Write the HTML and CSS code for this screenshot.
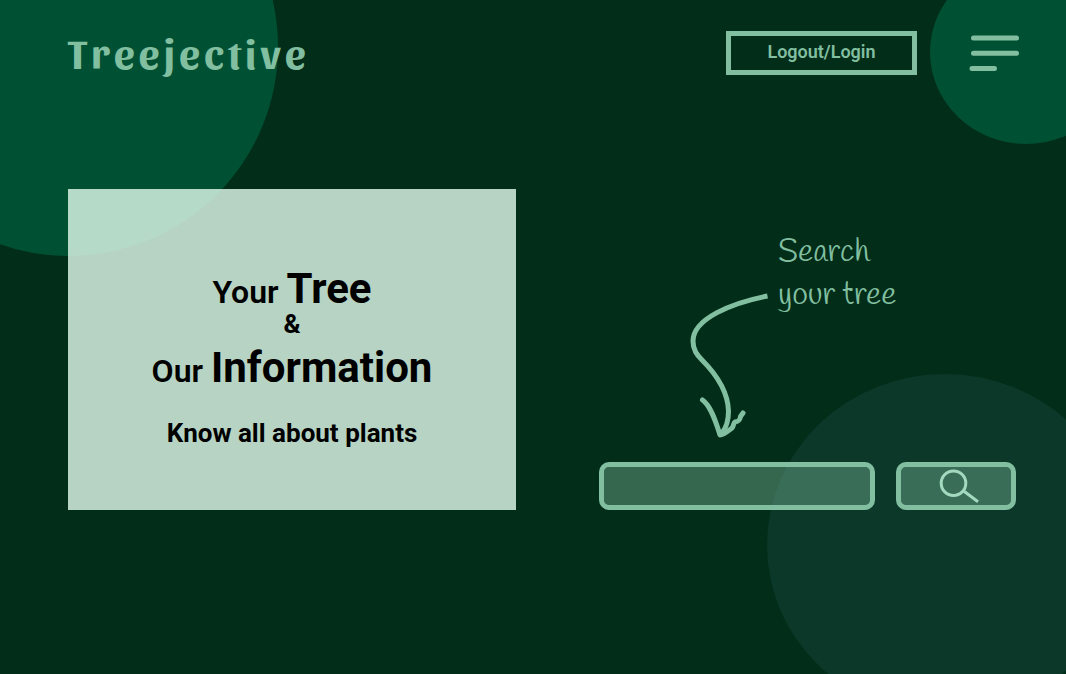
FILE: index.html
```html
<!DOCTYPE html>
<html lang="en">
<head>
<meta charset="utf-8">
<meta name="viewport" content="width=device-width, initial-scale=1">
<title>Treejective</title>
<link rel="stylesheet" href="styles.css">
</head>
<body>
<div class="page">
  <div class="blob blob-left"></div>
  <div class="blob blob-right"></div>
  <div class="blob blob-bottom"></div>

  <header class="header">
    <a class="brand" href="#">Treejective</a>
    <nav class="actions">
      <button class="login" type="button">Logout/Login</button>
      <button class="menu" type="button" aria-label="Menu">
        <svg class="menu-icon" viewBox="969 35 50 37" aria-hidden="true">
          <path d="M973.5 38H1016.5M973.5 53.300H1016.500M972 68.500H994.500"/>
        </svg>
      </button>
    </nav>
  </header>

  <main class="main">
    <section class="card">
      <h1 class="title">
        <span class="title-line">Your <strong class="big">Tree</strong></span>
        <span class="amp">&amp;</span>
        <span class="title-line">Our <strong class="big">Information</strong></span>
      </h1>
      <p class="tagline">Know all about plants</p>
    </section>

    <section class="search">
      <div class="hint">
        <svg class="arrow" viewBox="689 290 81 148" aria-hidden="true">
          <path class="shaft" d="M767.500 296C731 303 693 319 693 341C693 350 697 355 702 360C720 378 728 395 728.500 411C728.500 420 726 428 722 433"/>
          <path class="head" d="M702.500 400C710 405 715 419 720 435C724 435 728 431 732 428C734 426 733 423 735 422C740 421 740 419 740.500 416.500L743 413"/>
        </svg>
        <label class="hint-text" for="query">Search<br>your tree</label>
      </div>
      <form class="form">
        <input class="field" id="query" type="search">
        <button class="go" type="submit" aria-label="Search">
          <svg class="lens" viewBox="933 468 46 36" aria-hidden="true">
            <circle cx="953.500" cy="483.200" r="12.300"/>
            <path d="M963 490.500L978 501.700"/>
          </svg>
        </button>
      </form>
    </section>
  </main>
</div>
</body>
</html>
```
FILE: styles.css
```css
* {
  box-sizing: border-box;
}

body {
  margin: 0;
  background: #022d19;
  color: #81bfa0;
  font-family: Roboto, "Liberation Sans", sans-serif;
}

.page {
  position: relative;
  min-height: 100vh;
  overflow: hidden;
}

/* Decorative shapes behind the content */
.blob {
  position: absolute;
  border-radius: 50%;
  background: #005133;
}

.blob-left {
  left: -140px;
  top: -162px;
  width: 418px;
  height: 418px;
}

.blob-right {
  right: -56px;
  top: -40px;
  width: 192px;
  height: 184px;
}

.blob-bottom {
  right: -57px;
  bottom: -42px;
  width: 356px;
  height: 342px;
  background: #0b3829;
}

.header {
  position: relative;
  display: flex;
  justify-content: space-between;
  align-items: flex-start;
  padding: 31px 47px 0 68px;
}

.brand {
  color: inherit;
  font-family: Sansita, Lato, sans-serif;
  font-size: 42px;
  font-weight: 700;
  line-height: 42px;
  letter-spacing: 4px;
  text-decoration: none;
}

.actions {
  display: flex;
  align-items: center;
  gap: 52px;
}

.login {
  width: 191px;
  height: 44px;
  padding: 0 0 2px;
  border: 5px solid #81bfa0;
  background: none;
  color: inherit;
  font: 600 18px/24px Roboto, sans-serif;
}

.menu {
  padding: 0;
  border: 0;
  background: none;
}

.menu-icon {
  display: block;
  width: 50px;
  height: 37px;
  fill: none;
  stroke: #81bfa0;
  stroke-width: 5;
  stroke-linecap: round;
}

.main {
  position: relative;
  display: grid;
  grid-template-columns: 448fr 417fr;
  gap: 83px;
  padding: 114px 50px 64px 68px;
}

.card {
  padding: 80px 20px 61px;
  background: rgba(228, 252, 237, 0.8);
  color: #000;
  text-align: center;
}

.title {
  margin: 0;
  font-size: 32px;
  font-weight: 600;
}

.title-line,
.amp {
  display: block;
}

.title-line {
  line-height: 40px;
}

.amp {
  margin-bottom: 12px;
  font-size: 26px;
  font-weight: 700;
  line-height: 24px;
}

.big {
  font-size: 42px;
  font-weight: 700;
}

.tagline {
  margin: 26px 0 0;
  font-size: 26px;
  font-weight: 700;
  line-height: 32px;
}

.search {
  display: flex;
  flex-direction: column;
  justify-content: flex-end;
  gap: 24px;
}

.hint {
  display: flex;
  align-items: flex-start;
  gap: 8px;
  padding-left: 90px;
}

.arrow {
  flex: none;
  width: 81px;
  height: 148px;
  margin-top: 59px;
  fill: none;
  stroke: #81bfa0;
  stroke-width: 5;
  stroke-linejoin: round;
}

.head {
  stroke-linecap: round;
}

.hint-text {
  font-family: Handlee, Lato, sans-serif;
  font-size: 32px;
  font-weight: 300;
  line-height: 43px;
}

.form {
  display: flex;
  gap: 21px;
}

.field,
.go {
  height: 48px;
  border: 5px solid #81bfa0;
  border-radius: 10px;
  background: rgba(129, 191, 160, 0.4);
  background-clip: padding-box;
}

.field {
  flex: 1;
  min-width: 0;
  padding: 0 12px;
  color: #e4fced;
  font: 18px Roboto, sans-serif;
  appearance: none;
}

.go {
  display: flex;
  flex: none;
  align-items: center;
  justify-content: center;
  width: 120px;
  padding: 0;
}

.lens {
  width: 46px;
  height: 36px;
  fill: none;
  stroke: #a3dabf;
  stroke-width: 3;
}
```
